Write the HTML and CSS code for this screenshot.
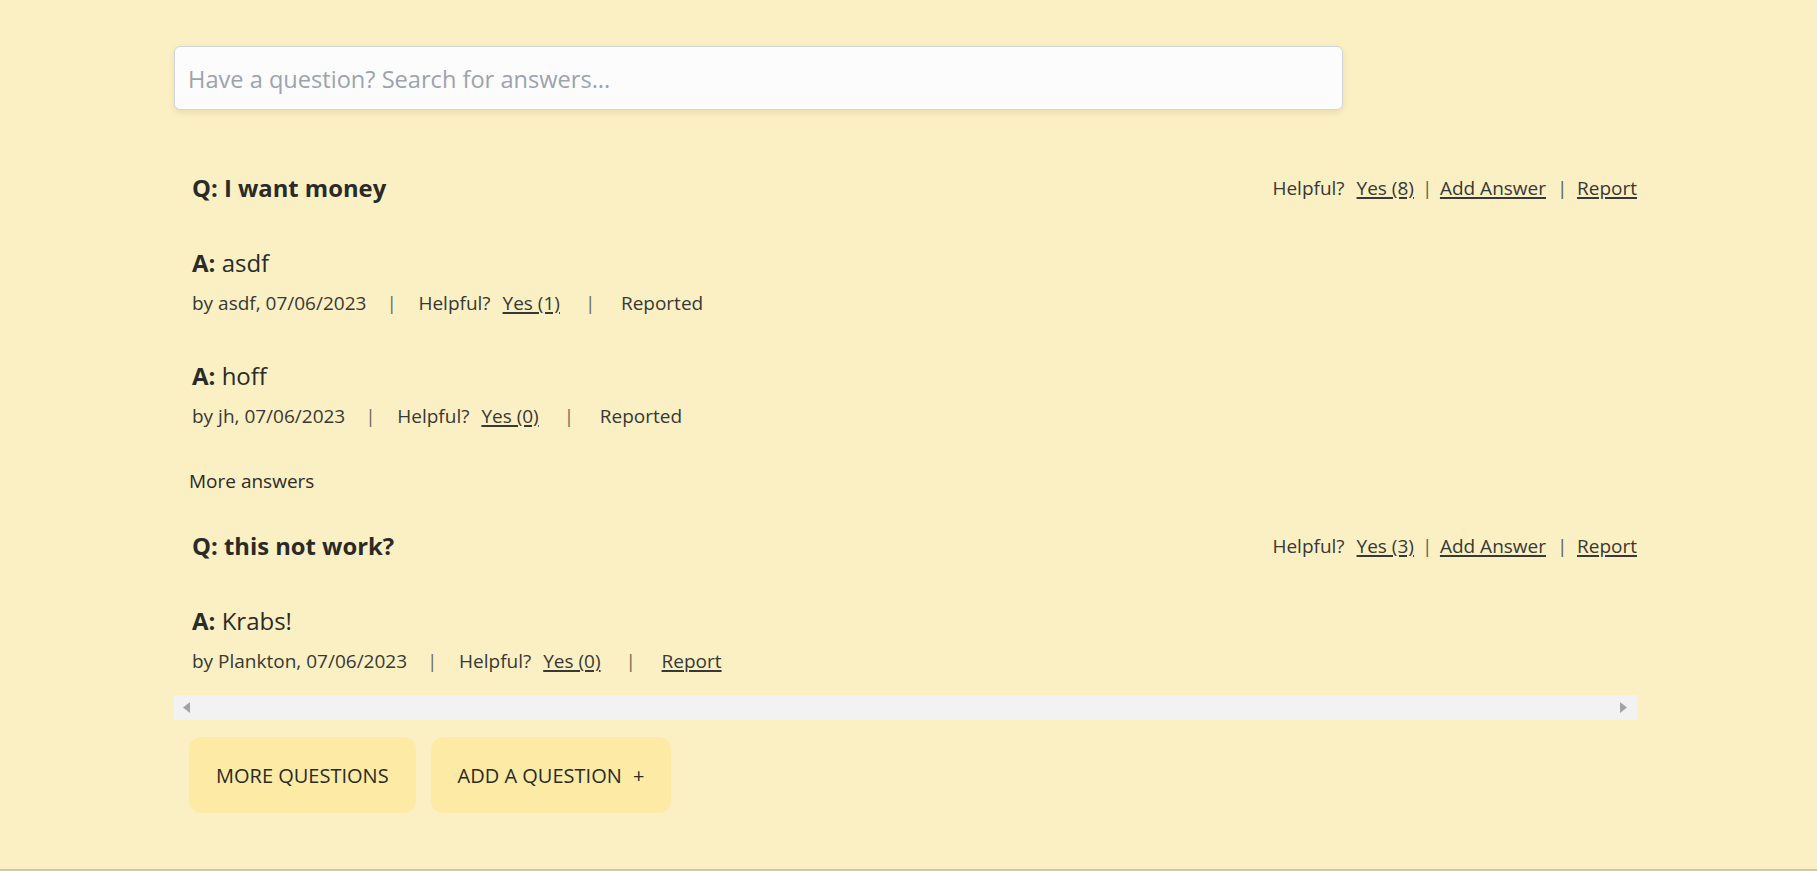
FILE: index.html
```html
<!DOCTYPE html>
<html lang="en">
<head>
<meta charset="utf-8">
<title>Questions &amp; Answers</title>
<link rel="stylesheet" href="styles.css">
</head>
<body>
<div class="page">
  <div class="qa">
    <div class="search">
      <input class="search-input" type="text" placeholder="Have a question? Search for answers...">
    </div>

    <div class="list">
      <div class="question">
        <div class="q-row">
          <div class="q-title">Q: I want money</div>
          <div class="q-actions">
            <span>Helpful?</span>
            <a class="link yes" href="#">Yes (8)</a>
            <span class="sep-sm">|</span>
            <a class="link" href="#">Add Answer</a>
            <span class="sep-sm sep-last">|</span>
            <a class="link" href="#">Report</a>
          </div>
        </div>

        <div class="answer">
          <div class="a-body"><b>A:</b> asdf</div>
          <div class="a-meta">
            <span>by asdf, 07/06/2023</span>
            <span class="sep sep-a">|</span>
            <span>Helpful?</span>
            <a class="link yes" href="#">Yes (1)</a>
            <span class="sep sep-b">|</span>
            <span>Reported</span>
          </div>
        </div>

        <div class="answer">
          <div class="a-body"><b>A:</b> hoff</div>
          <div class="a-meta">
            <span>by jh, 07/06/2023</span>
            <span class="sep sep-a">|</span>
            <span>Helpful?</span>
            <a class="link yes" href="#">Yes (0)</a>
            <span class="sep sep-b">|</span>
            <span>Reported</span>
          </div>
        </div>

        <div class="more-answers">More answers</div>
      </div>

      <div class="question q2">
        <div class="q-row">
          <div class="q-title">Q: this not work?</div>
          <div class="q-actions">
            <span>Helpful?</span>
            <a class="link yes" href="#">Yes (3)</a>
            <span class="sep-sm">|</span>
            <a class="link" href="#">Add Answer</a>
            <span class="sep-sm sep-last">|</span>
            <a class="link" href="#">Report</a>
          </div>
        </div>

        <div class="answer">
          <div class="a-body"><b>A:</b> Krabs!</div>
          <div class="a-meta">
            <span>by Plankton, 07/06/2023</span>
            <span class="sep sep-a">|</span>
            <span>Helpful?</span>
            <a class="link yes" href="#">Yes (0)</a>
            <span class="sep sep-b">|</span>
            <a class="link" href="#">Report</a>
          </div>
        </div>
      </div>
    </div>

    <div class="hscroll">
      <svg class="arrow" width="7" height="11" viewBox="0 0 7 11"><path d="M7 0 L7 11 L0 5.5 Z" fill="#a3a3a3"/></svg>
      <svg class="arrow" width="7" height="11" viewBox="0 0 7 11"><path d="M0 0 L0 11 L7 5.5 Z" fill="#a3a3a3"/></svg>
    </div>

    <div class="buttons">
      <button class="btn">MORE QUESTIONS</button>
      <button class="btn">ADD A QUESTION <span class="plus">+</span></button>
    </div>
  </div>
</div>
</body>
</html>
```
FILE: styles.css
```css
html, body {
  margin: 0;
  padding: 0;
}
body {
  background: #fbf0c4;
  font-family: "Open Sans", "Noto Sans", sans-serif;
  color: #2b2b27;
}
.page {
  box-sizing: border-box;
  min-height: 871px;
  padding-top: 46px;
  border-bottom: 2px solid #d2c995;
}
.qa {
  margin-left: 174px;
  width: 1463px;
}
.search {
  width: 1169px;
}
.search-input {
  box-sizing: border-box;
  width: 100%;
  height: 64px;
  padding: 2px 13px 0;
  border: 1px solid #d1d5db;
  border-radius: 6px;
  background: #fcfcfd;
  box-shadow: 0 3px 6px rgba(120, 100, 40, 0.13);
  font-family: "Open Sans", "Noto Sans", sans-serif;
  font-size: 23.6px;
  color: #333;
  outline: none;
}
.search-input::placeholder {
  color: #9ca3af;
}
.list {
  margin-top: 58px;
  padding-left: 18px;
}
.q-row {
  height: 40px;
  display: flex;
  align-items: center;
  justify-content: space-between;
}
.q-title {
  font-size: 23.8px;
  font-weight: 700;
  color: #2a2a26;
}
.q-actions {
  display: flex;
  align-items: center;
  font-size: 19px;
  color: #383834;
}
.link {
  color: #383834;
  text-decoration: underline;
  text-decoration-thickness: 2px;
  text-underline-offset: 2px;
}
.yes {
  margin-left: 12px;
}
.sep-sm {
  display: inline-block;
  width: 10px;
  text-align: center;
  margin: 0 8px;
  color: #5e5e55;
}
.sep-sm.sep-last {
  margin: 0 10px 0 11px;
}
.answer {
  margin-top: 37px;
}
.answer + .answer {
  margin-top: 40px;
}
.a-body {
  height: 36px;
  line-height: 36px;
  font-size: 24px;
  color: #2b2b27;
}
.a-body b {
  font-weight: 700;
}
.a-meta {
  margin-top: 7px;
  height: 30px;
  line-height: 30px;
  font-size: 19px;
  color: #383834;
  display: flex;
  align-items: center;
}
.sep {
  display: inline-block;
  width: 10px;
  text-align: center;
  color: #6a6a5e;
}
.sep-a {
  margin: 0 22px 0 20px;
}
.sep-b {
  margin: 0 26px 0 25px;
}
.more-answers {
  margin-top: 35px;
  margin-left: -3px;
  height: 30px;
  line-height: 30px;
  font-size: 19px;
  color: #2b2b27;
}
.q2 {
  margin-top: 30px;
}
.hscroll {
  margin-top: 19px;
  height: 25px;
  background: #f2f2f2;
  display: flex;
  align-items: center;
  justify-content: space-between;
  padding: 0 10px 0 9px;
}
.arrow {
  display: block;
}
.buttons {
  margin-top: 17px;
  margin-left: 15px;
  display: flex;
  gap: 15px;
}
.btn {
  height: 76px;
  padding: 0 27px;
  border: none;
  border-radius: 12px;
  background: #fdeba5;
  font-family: "Open Sans", "Noto Sans", sans-serif;
  font-size: 20px;
  font-weight: 500;
  color: #2a2a26;
  cursor: pointer;
}
.plus {
  margin-left: 6px;
}
```
